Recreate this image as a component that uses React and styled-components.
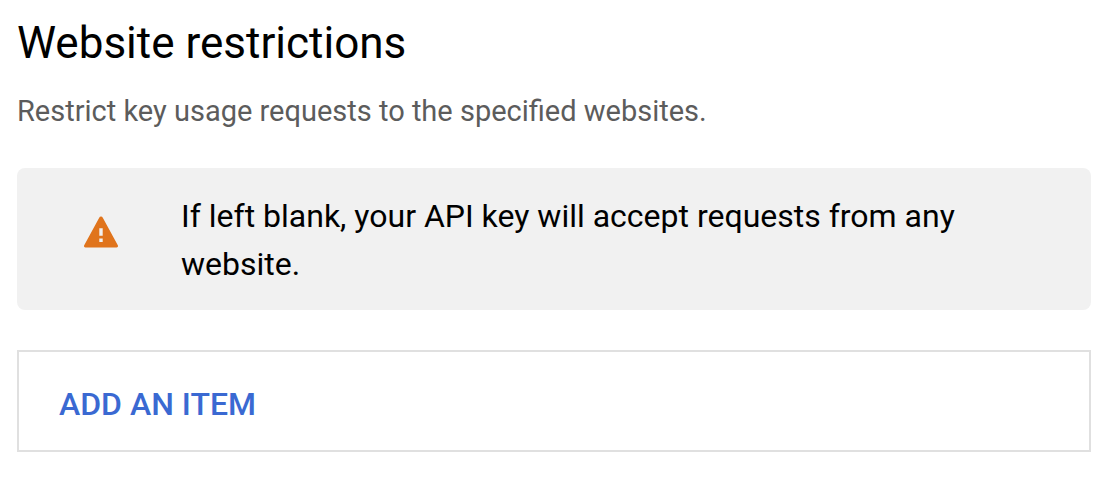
import React from 'react';
import styled, { createGlobalStyle } from 'styled-components';

const GlobalStyle = createGlobalStyle`
  body {
    margin: 0;
    background: #ffffff;
    font-family: Roboto, Arial, sans-serif;
  }
`;

const Section = styled.section`
  padding: 15px 25px 24px 17px;
`;

const Title = styled.h2`
  margin: 0;
  font-size: 44px;
  font-weight: 400;
  line-height: 56px;
  color: #000000;
`;

const Description = styled.p`
  margin: 20px 0 37px;
  font-size: 29px;
  line-height: 40px;
  color: #5c5c5c;
`;

const Notice = styled.div`
  display: flex;
  align-items: flex-start;
  padding: 24px 64px 22px;
  margin-bottom: 40px;
  border-radius: 8px;
  background: #f1f1f1;
`;

const WarningIcon = styled.svg`
  flex: none;
  width: 40px;
  height: 40px;
  margin: 20px 60px 0 0;
  fill: #e0741c;
`;

const NoticeText = styled.p`
  margin: 0;
  max-width: 800px;
  font-size: 32px;
  line-height: 48px;
  color: #000000;
`;

const ItemList = styled.div`
  padding: 30px 40px 24px;
  border: 2px solid #e0e0e0;
`;

const AddButton = styled.button`
  display: block;
  padding: 0;
  border: none;
  background: none;
  font-family: inherit;
  font-size: 32px;
  font-weight: 500;
  line-height: 44px;
  color: #3a69d2;
  cursor: pointer;
`;

function App() {
  return (
    <>
      <GlobalStyle />
      <Section>
        <Title>Website restrictions</Title>
        <Description>Restrict key usage requests to the specified websites.</Description>
        <Notice>
          <WarningIcon viewBox="0 0 40 40" aria-hidden="true">
            <path
              d="M18.2 5.7a2 2 0 0 1 3.6 0L36.8 33.2a1.5 1.5 0 0 1-1.3 2.3h-31a1.5 1.5 0 0 1-1.3-2.3zM18.3 16.3v7.4h3.4v-7.4zM18.3 26.5v3.6h3.4v-3.6z"
              fillRule="evenodd"
            />
          </WarningIcon>
          <NoticeText>If left blank, your API key will accept requests from any website.</NoticeText>
        </Notice>
        <ItemList>
          <AddButton type="button">ADD AN ITEM</AddButton>
        </ItemList>
      </Section>
    </>
  );
}

export default App;
